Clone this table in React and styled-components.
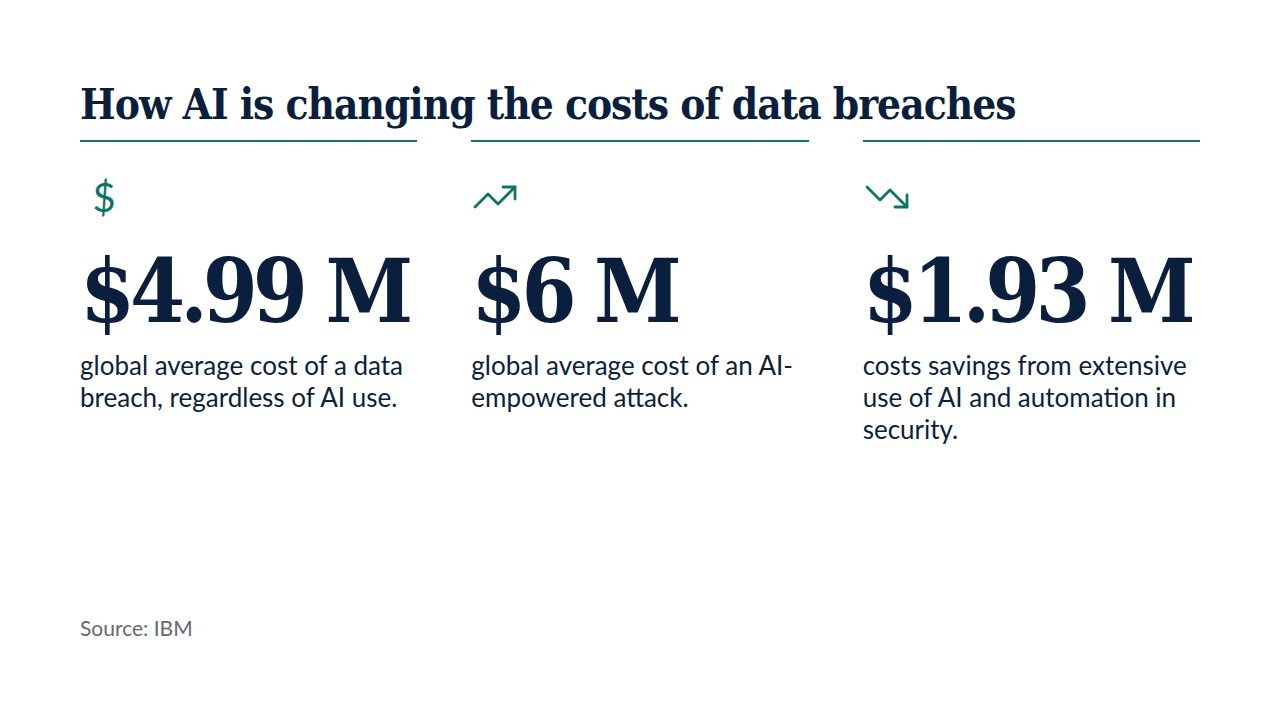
import React from "react";
import styled, { createGlobalStyle } from "styled-components";
import { TrendingUp, TrendingDown } from "lucide-react";

const GlobalStyle = createGlobalStyle`
  html, body {
    margin: 0;
    padding: 0;
    background: #ffffff;
  }
  * {
    box-sizing: border-box;
  }
`;

const Page = styled.div`
  width: 1280px;
  height: 720px;
  padding: 78px 80px 0;
  display: flex;
  flex-direction: column;
  font-family: Lato, "Liberation Sans", sans-serif;
  color: #0c1f3c;
`;

const Title = styled.h1`
  margin: 0;
  font-family: "DejaVu Serif", "Liberation Serif", serif;
  font-stretch: condensed;
  font-weight: 700;
  font-size: 42px;
  line-height: 54px;
  letter-spacing: -1px;
  color: #0a1f3d;
  white-space: nowrap;
`;

const Stats = styled.div`
  display: grid;
  grid-template-columns: repeat(3, minmax(0, 1fr));
  column-gap: 54px;
  margin-top: 8px;
`;

const Stat = styled.div`
  border-top: 2px solid #0e7564;
  padding-top: 31px;
  display: flex;
  flex-direction: column;
`;

const IconBox = styled.div`
  width: 48px;
  height: 48px;
  display: flex;
  align-items: center;
  justify-content: center;
  color: #0e7564;
`;

const DollarGlyph = styled.span`
  font-family: Lato, sans-serif;
  font-weight: 400;
  font-size: 40px;
  line-height: 1;
  color: #0e7564;
`;

const Figure = styled.div`
  margin-top: 22px;
  font-family: "DejaVu Serif", "Liberation Serif", serif;
  font-stretch: condensed;
  font-weight: 700;
  font-size: 88px;
  line-height: 96px;
  letter-spacing: -5px;
  color: #0a1f3d;
  white-space: nowrap;
`;

const Caption = styled.p`
  margin: 10px 0 0;
  font-size: 26px;
  line-height: 32px;
  color: #0c1f3c;
`;

const Source = styled.div`
  margin-top: auto;
  margin-bottom: 78px;
  font-size: 21px;
  line-height: 28px;
  color: #666a6e;
`;

const stats = [
  {
    icon: <DollarGlyph>$</DollarGlyph>,
    value: "$4.99 M",
    text: "global average cost of a data breach, regardless of AI use.",
  },
  {
    icon: <TrendingUp size={48} strokeWidth={1.4} />,
    value: "$6 M",
    text: "global average cost of an AI-empowered attack.",
  },
  {
    icon: <TrendingDown size={48} strokeWidth={1.4} />,
    value: "$1.93 M",
    text: "costs savings from extensive use of AI and automation in security.",
  },
];

export default function App() {
  return (
    <>
      <GlobalStyle />
      <Page>
        <Title>How AI is changing the costs of data breaches</Title>
        <Stats>
          {stats.map((s) => (
            <Stat key={s.value}>
              <IconBox>{s.icon}</IconBox>
              <Figure>{s.value}</Figure>
              <Caption>{s.text}</Caption>
            </Stat>
          ))}
        </Stats>
        <Source>Source: IBM</Source>
      </Page>
    </>
  );
}
